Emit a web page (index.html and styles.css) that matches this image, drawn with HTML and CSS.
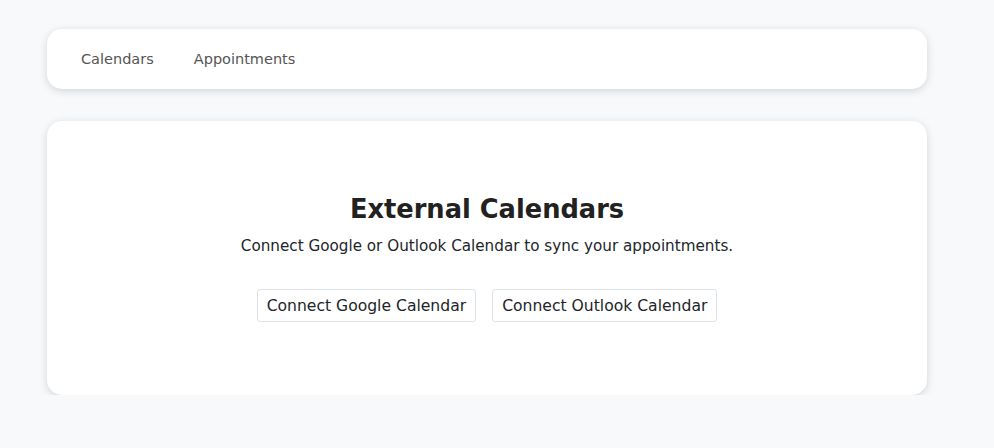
FILE: index.html
```html
<!DOCTYPE html>
<html lang="en">
<head>
<meta charset="utf-8">
<title>External Calendars</title>
<link rel="stylesheet" href="styles.css">
</head>
<body>
<div class="page">
  <nav class="card nav">
    <a class="nav-link" href="#">Calendars</a>
    <a class="nav-link" href="#">Appointments</a>
  </nav>
  <section class="card main">
    <h1 class="title">External Calendars</h1>
    <p class="subtitle">Connect Google or Outlook Calendar to sync your appointments.</p>
    <div class="actions">
      <button class="btn">Connect Google Calendar</button>
      <button class="btn">Connect Outlook Calendar</button>
    </div>
  </section>
</div>
</body>
</html>
```
FILE: styles.css
```css
html, body {
  margin: 0;
  padding: 0;
  background: #f8f9fa;
  font-family: "DejaVu Sans", "Noto Sans", sans-serif;
  color: #212529;
}
.page {
  width: 880px;
  padding: 29px 0 0 47px;
  display: flex;
  flex-direction: column;
  gap: 32px;
}
.card {
  background: #fff;
  border-radius: 15px;
  box-shadow: 0 2px 8px rgba(0, 0, 0, 0.15);
}
.nav {
  height: 60px;
  display: flex;
  align-items: center;
  padding: 0 18px;
  box-sizing: border-box;
}
.nav-link {
  padding: 8px 16px;
  font-size: 14.5px;
  color: #555;
  text-decoration: none;
  margin-right: 8px;
}
.main {
  height: 274px;
  box-sizing: border-box;
  padding-top: 67px;
  display: flex;
  flex-direction: column;
  align-items: center;
}
.title {
  margin: 0;
  font-size: 25.7px;
  line-height: 42px;
  font-weight: 700;
  color: #212121;
}
.subtitle {
  margin: 4px 0 0;
  font-size: 15.2px;
  line-height: 24px;
}
.actions {
  display: flex;
  gap: 16px;
  margin-top: 31px;
}
.btn {
  font-family: inherit;
  font-size: 15.6px;
  height: 33px;
  padding: 0 9px;
  background: #fff;
  color: #212529;
  border: 1px solid #dee2e6;
  border-radius: 3px;
}
```
